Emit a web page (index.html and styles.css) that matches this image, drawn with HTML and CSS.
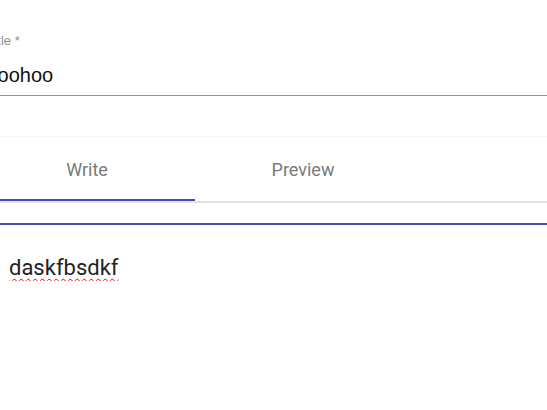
FILE: index.html
```html
<!DOCTYPE html>
<html>
<head>
<meta charset="utf-8">
<link rel="stylesheet" href="styles.css">
</head>
<body>
<div class="page">
  <div class="field">
    <label class="field-label">Title *</label>
    <div class="field-input">Woohoo</div>
  </div>
  <div class="tabs">
    <div class="tab tab-active">Write</div>
    <div class="tab">Preview</div>
  </div>
  <div class="editor">
    <div class="editor-text"><span class="misspelled">daskfbsdkf</span></div>
  </div>
</div>
</body>
</html>
```
FILE: styles.css
```css
html, body {
  margin: 0;
  padding: 0;
  background: #ffffff;
  overflow: hidden;
}
.page {
  margin-left: -21px;
  width: 568px;
}
.field {
  padding-top: 33px;
}
.field-label {
  display: block;
  font-family: "Liberation Sans", Arial, sans-serif;
  font-size: 13px;
  line-height: 16px;
  color: #8f8f8f;
  padding-left: 8px;
}
.field-input {
  font-family: "Liberation Sans", Arial, sans-serif;
  font-size: 20px;
  line-height: 24px;
  color: #111;
  padding: 14px 0 8px 0;
  border-bottom: 1px solid #949494;
}
.tabs {
  display: flex;
  margin-top: 40px;
  border-top: 1px solid #f5f5f5;
  border-bottom: 2px solid #e3e3e3;
}
.tab {
  width: 216px;
  height: 64px;
  box-sizing: border-box;
  display: flex;
  align-items: center;
  justify-content: center;
  font-family: Roboto, "Liberation Sans", sans-serif;
  font-size: 18px;
  color: #7a7a7a;
}
.tab-active {
  border-bottom: 2px solid #3f51b5;
  padding-top: 2px;
}
.editor {
  margin-top: 20px;
  border-top: 2px solid #3f51b5;
  padding: 30px 0 0 30px;
}
.editor-text {
  font-family: Roboto, "Liberation Sans", sans-serif;
  font-size: 22px;
  line-height: 26px;
  color: #222;
}
.misspelled {
  text-decoration-line: underline;
  text-decoration-style: wavy;
  text-decoration-color: #ff0000;
  text-decoration-thickness: 1px;
  text-underline-offset: 3px;
  text-decoration-skip-ink: none;
}
```
